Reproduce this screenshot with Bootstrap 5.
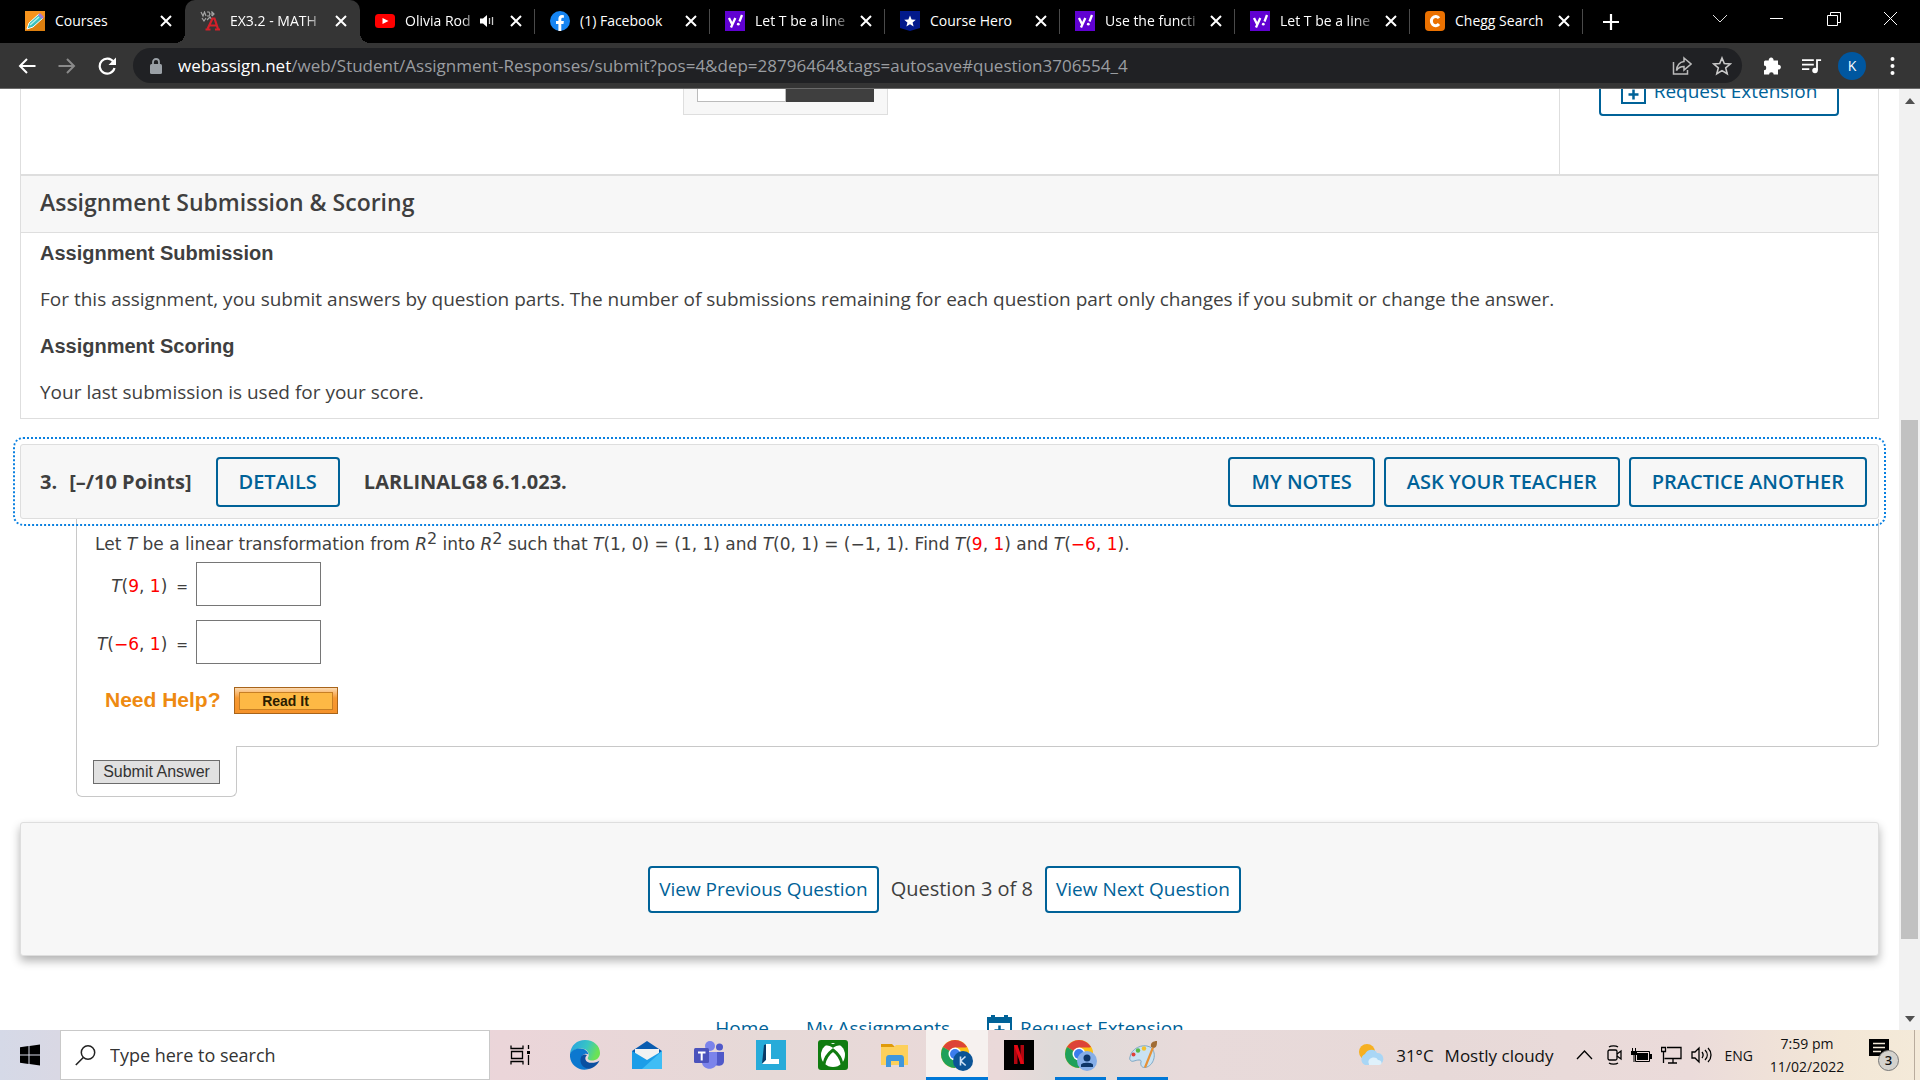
<!DOCTYPE html>
<html lang="en">
<head>
<meta charset="utf-8">
<meta name="viewport" content="width=device-width, initial-scale=1">
<title>EX3.2 - MATH</title>
<link href="https://cdn.jsdelivr.net/npm/bootstrap@5.3.0/dist/css/bootstrap.min.css" rel="stylesheet">
<style>
  :root { --ui: "Open Sans", "Noto Sans", sans-serif; --wa-blue: #006298; --ink: #3f3f3f; --line: #dedede; --pane: #f7f7f7; }
  body { font-family: var(--ui); color: var(--ink); font-size: 20px; line-height: 28px; }
  svg { display: block; flex: none; }

  /* browser chrome */
  .tabstrip { background: #000; height: 43px; padding-left: 10px; }
  .tab { width: 175px; height: 43px; padding: 0 13px 2px 15px; color: #fff; font-size: 14px; line-height: 20px; position: relative; }
  .tab-end { width: 173px; }
  .tab .label { flex: 1 1 0; margin-left: 10px; white-space: nowrap; overflow: hidden; }
  .tab .fade-label { -webkit-mask-image: linear-gradient(to right, #000 75%, transparent); mask-image: linear-gradient(to right, #000 75%, transparent); }
  .tab.sep::after { content: ""; position: absolute; right: 0; top: 9px; width: 1px; height: 25px; background: #4a4a4a; }
  .tab.current { background: #353535; border-radius: 10px 10px 0 0; }
  .tab.current::before, .tab.current::after { content: ""; position: absolute; bottom: 0; width: 10px; height: 10px; }
  .tab.current::before { left: -10px; background: radial-gradient(circle at 0 0, transparent 10px, #353535 10px); }
  .tab.current::after { right: -10px; background: radial-gradient(circle at 100% 0, transparent 10px, #353535 10px); }
  .plainbtn { background: none; border: 0; padding: 0; color: inherit; display: block; flex: none; }
  .tab .plainbtn { margin-left: 6px; }
  .newtab { margin-left: 20px; }
  .wincontrols { padding: 8px 1px 0 0; }
  .toolbar { background: #353535; height: 46px; border-bottom: 1px solid #6a6a6a; padding: 0 25px 0 18px; }
  .navset { gap: 22px; margin-right: 17px; }
  .omnibox { background: #202124; border-radius: 18px; height: 35px; padding: 0 10px 0 17px; }
  .url { color: #9a9da1; font-size: 17px; line-height: 24px; white-space: nowrap; overflow: hidden; }
  .url b { color: #fff; font-weight: 400; }
  .avatar { width: 28px; height: 28px; border-radius: 50%; background: #0057a0; color: #fff; font-size: 14px; line-height: 28px; text-align: center; }

  /* scrolled document */
  .viewport { overflow: hidden; min-height: 0; background: #fff; }
  .doc { padding: 0 20px; margin-top: -40px; }
  .track { width: 21px; background: #f1f1f1; padding: 9px 2px 8px 2px; }
  .thumb { background: #c1c1c1; }
  .panel-top { border: 1px solid var(--line); border-width: 0 1px 2px; height: 127px; }
  .toggle-col { padding-right: 10px; }
  .side-col { width: 319px; border-left: 1px solid var(--line); padding: 17px 39px 0 39px; }
  .btn-wa { --bs-btn-color: var(--wa-blue); --bs-btn-border-color: var(--wa-blue); --bs-btn-hover-color: #fff; --bs-btn-hover-bg: var(--wa-blue); --bs-btn-border-width: 2px; --bs-btn-border-radius: 4px; --bs-btn-font-size: 20px; --bs-btn-line-height: 28px; --bs-btn-padding-x: 21px; --bs-btn-padding-y: 9px; white-space: nowrap; }
  .btn-wa.strong-btn { --bs-btn-font-weight: 600; }
  .btn-wa.pager { --bs-btn-bg: #fff; --bs-btn-font-size: 19px; --bs-btn-padding-x: 9px; --bs-btn-padding-y: 8px; --bs-btn-line-height: 27px; }
  .btn-wa.btn-ext { --bs-btn-font-size: 19px; --bs-btn-padding-x: 10px; }
  .toggle-box { width: 205px; height: 66px; background: var(--pane); border: 1px solid var(--line); padding: 0 13px 12px; }
  .toggle-box span { flex: 1 1 0; }
  .t-off { background: #fff; border: 1px solid #bbb; }
  .t-on { background: var(--ink); }
  .sub-head { background: var(--pane); border: 1px solid var(--line); border-top: 0; padding: 10px 19px 14px; }
  .sub-head h2 { font-size: 23px; line-height: 32px; font-weight: 600; margin: 0; }
  .sub-body { border: 1px solid var(--line); border-top: 0; padding: 6px 19px 12px; margin-bottom: 25px; }
  .sub-body h3 { font: 700 20px/28px "Liberation Sans", Arial, sans-serif; margin: 0 0 18px; }
  .sub-body p { margin: 0 0 19px; font-size: 19px; }
  .sub-body p:last-child { margin: 0; }
  .q-head { background: var(--pane); border: 1px solid var(--line); border-radius: 3px; height: 75px; padding: 0 11px 0 19px; font-weight: 700; outline: 2px dotted #0a80e0; outline-offset: 5px; }
  .q-actions { gap: 9px; }
  .q-wrap { margin-left: 56px; }
  .q-body { border: 1px solid #c8c8c8; border-top: 0; border-radius: 0 0 4px 0; padding: 9px 18px 31px; height: 228px; font: 17px/32px "DejaVu Sans", Verdana, sans-serif; }
  .q-body p { margin: 0 0 2px; }
  .q-body sup { font-size: 16px; top: -6px; line-height: 0; }
  .red { color: #f00; }
  .ans { margin-bottom: 14px; }
  .ans label { width: 93px; padding-top: 4px; margin-right: 8px; white-space: nowrap; }
  .eq { font-size: 14px; margin-left: 9px; }
  .ans input { width: 125px; height: 44px; border: 1px solid #767676; background: #fff; }
  .help { margin: 22px 0 0 10px; height: 28px; gap: 13px; }
  .help strong { font: 700 21px/28px "Liberation Sans", Arial, sans-serif; color: #ee8a11; }
  .read { width: 104px; height: 27px; border: 1px solid #a8641a; padding: 4px; background: linear-gradient(#fbd9b0, #f79a33 40%, #f5922a); }
  .read span { display: block; border: 1px solid #c77f24; background: #fdb945; color: #2a1c00; font: 700 14px/16px "Liberation Sans", Arial, sans-serif; }
  .q-submit { border: 1px solid #c8c8c8; border-top: 0; border-radius: 0 0 6px 6px; width: 161px; height: 51px; margin-top: -1px; background: #fff; position: relative; padding: 14px 0 0 16px; }
  .q-submit button { width: 127px; height: 24px; border: 1px solid #6c6c6c; background: #e1e1e1; color: #333; padding: 0; font: 16px/22px "Liberation Sans", Arial, sans-serif; display: block; }
  .pager-box { background: var(--pane); border: 1px solid var(--line); border-radius: 3px; height: 134px; margin-top: 25px; padding-right: 10px; box-shadow: 0 5px 10px rgba(0,0,0,.3); }
  .foot { margin-top: 58px; font-size: 19px; gap: 37px; }
  .foot a { color: var(--wa-blue); text-decoration: none; }

  /* taskbar */
  .taskbar { height: 50px; background: linear-gradient(90deg, #d5d9e7 0, #d9d8e4 3%, #ebd5d9 26%, #e6d9d7 40%, #ead9d9 52%, #dfdbd9 55%, #e8dada 62%, #e7d9d8 75%, #ebdbda 88%, #f3e7d6 96%, #f4ead9 100%); color: #111; }
  .start { width: 60px; height: 50px; }
  .search { width: 430px; height: 50px; background: #fff; border: 1px solid #c9c9c9; padding-left: 14px; }
  .search input { border: 0; outline: 0; background: none; font-size: 18px; line-height: 26px; width: 360px; color: #222; padding: 0; margin-left: 14px; }
  .search input::placeholder { color: #333; opacity: 1; }
  .app { width: 62px; height: 50px; display: flex; align-items: center; justify-content: center; position: relative; text-decoration: none; }
  .app.tasks { width: 64px; padding-right: 4px; }
  .app.open::after { content: ""; position: absolute; left: 5px; right: 6px; bottom: 0; height: 3px; background: #0078d7; }
  .app.front { background: #f6f1ef; }
  .app.front::after { left: 0; right: 0; }
  .tray { font-size: 14px; line-height: 23px; white-space: nowrap; }
  .weather { font-size: 17px; gap: 11px; margin: 0 22px 0 12px; }
  .icons { gap: 9px; margin: 0 12px 0 14px; }
  .clock { width: 84px; text-align: center; margin: 0 11px 0 12px; }
  .note { width: 34px; height: 32px; position: relative; margin: 0 11px 0 9px; }
  .note b { position: absolute; left: 9px; top: 11px; width: 21px; height: 21px; border-radius: 50%; background: #d4d2cd; border: 1px solid #777; font-weight: 600; font-size: 13px; line-height: 19px; text-align: center; }
  .showdesk { width: 6px; height: 50px; border-left: 1px solid #b9ac9d; }
</style>
<script src="https://cdn.jsdelivr.net/npm/bootstrap@5.3.0/dist/js/bootstrap.bundle.min.js"></script>
</head>
<body class="vh-100 d-flex flex-column overflow-hidden">

<svg width="0" height="0" class="position-absolute">
  <defs>
    <symbol id="x" viewBox="0 0 12 12"><path d="M1 1l10 10M11 1L1 11" stroke="#fff" stroke-width="2" fill="none"/></symbol>
    <symbol id="yahoo" viewBox="0 0 20 20"><path fill="#6001d2" d="M0 0h20v20H0z"/><path d="M4 7l3 6M10.300 7L6 16.500M14.500 10.500L17 4" stroke="#fff" stroke-width="2.300" fill="none"/><circle cx="13.300" cy="13.200" r="1.400" fill="#fff"/></symbol>
    <symbol id="chrome" viewBox="0 0 32 32"><circle cx="14" cy="15" r="14" fill="#fbc116"/><path d="M14 15L1.900 8A14 14 0 0 1 26.100 8z" fill="#dd4437"/><path d="M14 15L1.900 8A14 14 0 0 0 14 29l6-10.500z" fill="#1fa15a"/><path d="M14 15V8.500h12.300A14 14 0 0 1 14 29l6-10.500z" fill="#fbc116"/><circle cx="14" cy="15" r="6.500" fill="#fff"/><circle cx="14" cy="15" r="5" fill="#3b7ded"/></symbol>
    <symbol id="cal" viewBox="0 0 25 26"><path d="M1 4h23v21H1z" fill="#fff" stroke="#006298" stroke-width="2"/><path d="M1 4h23v5H1zM4 1h4v4H4zM17 1h4v4h-4z" fill="#006298"/><path d="M12.500 11.500v10M7.500 16.500h10" stroke="#006298" stroke-width="2.500"/></symbol>
  </defs>
</svg>

<header class="flex-shrink-0">
  <div class="tabstrip d-flex" id="tabs">
    <div class="tab d-flex align-items-center flex-shrink-0">
      <svg width="20" height="20" viewBox="0 0 20 20"><path fill="#f7941d" d="M0 0h20v20H0z"/><path fill="#dd7f0f" d="M0 20L20 6v14z"/><path d="M2 18l2-6L14 3l4 4L8 16z" fill="#3cc0bd" stroke="#fff" stroke-width="1"/><path d="M13 4l2-2 4 4-2 2z" fill="#a77bd0"/><path d="M5 14l9-8" stroke="#b4f3ed" stroke-width="1.500"/></svg>
      <span class="label">Courses</span><button class="plainbtn" aria-label="Close tab"><svg width="12" height="12"><use href="#x"/></svg></button>
    </div>
    <div class="tab current d-flex align-items-center flex-shrink-0">
      <svg width="20" height="20" viewBox="0 0 20 20"><path d="M1 1l2 4 1.500-4 1.500 4M7 1h2l1 2-1 2H7M12 5V1l2 2-2 2M2 7l2 3 2-3M7 9l3-3 2 3" stroke="#a5a5a5" stroke-width="1.200" fill="none"/><path d="M7.500 18l5-10.500h2l3.500 10.500M10 14.500h6" stroke="#d3202a" stroke-width="2.200" fill="none"/><path d="M5.500 18.500h5M15 18.500h5" stroke="#d3202a" stroke-width="2"/></svg>
      <span class="label fade-label">EX3.2 - MATH</span><button class="plainbtn" aria-label="Close tab"><svg width="12" height="12"><use href="#x"/></svg></button>
    </div>
    <div class="tab sep d-flex align-items-center flex-shrink-0">
      <svg width="20" height="20" viewBox="0 0 20 20"><rect y="3" width="20" height="14" rx="3.500" fill="#f00"/><path d="M7.500 7l6 3-6 3z" fill="#fff"/></svg>
      <span class="label fade-label">Olivia Rod</span>
      <svg width="14" height="14" viewBox="0 0 14 14"><path d="M0 4.500h3L7 1v12L3 9.500H0z" fill="#fff"/><path d="M9.500 4v6M12.500 3v8" stroke="#ccc" stroke-width="1.300"/></svg>
      <button class="plainbtn ms-3" aria-label="Close tab"><svg width="12" height="12"><use href="#x"/></svg></button>
    </div>
    <div class="tab sep d-flex align-items-center flex-shrink-0">
      <svg width="20" height="20" viewBox="0 0 20 20"><circle cx="10" cy="10" r="10" fill="#1584f2"/><path d="M8.400 20v-7H6v-3h2.400V7.800C8.400 5.300 9.900 4 12 4l1.900.2v2.500h-1.200c-1.100 0-1.400.7-1.400 1.400V10h2.600l-.4 3h-2.200v7z" fill="#fff"/></svg>
      <span class="label">(1) Facebook</span><button class="plainbtn" aria-label="Close tab"><svg width="12" height="12"><use href="#x"/></svg></button>
    </div>
    <div class="tab sep d-flex align-items-center flex-shrink-0">
      <svg width="20" height="20"><use href="#yahoo"/></svg>
      <span class="label fade-label">Let T be a line</span><button class="plainbtn" aria-label="Close tab"><svg width="12" height="12"><use href="#x"/></svg></button>
    </div>
    <div class="tab sep d-flex align-items-center flex-shrink-0">
      <svg width="20" height="20" viewBox="0 0 20 20"><path d="M0 0h20v17l-10 3-10-3z" fill="#02198b"/><path d="M10 4.500l1.600 3.900 4.200.3-3.200 2.700 1 4.100L10 13.300l-3.600 2.200 1-4.100-3.200-2.700 4.200-.3z" fill="#fff"/></svg>
      <span class="label">Course Hero</span><button class="plainbtn" aria-label="Close tab"><svg width="12" height="12"><use href="#x"/></svg></button>
    </div>
    <div class="tab sep d-flex align-items-center flex-shrink-0">
      <svg width="20" height="20"><use href="#yahoo"/></svg>
      <span class="label fade-label">Use the functi</span><button class="plainbtn" aria-label="Close tab"><svg width="12" height="12"><use href="#x"/></svg></button>
    </div>
    <div class="tab sep d-flex align-items-center flex-shrink-0">
      <svg width="20" height="20"><use href="#yahoo"/></svg>
      <span class="label fade-label">Let T be a line</span><button class="plainbtn" aria-label="Close tab"><svg width="12" height="12"><use href="#x"/></svg></button>
    </div>
    <div class="tab sep tab-end d-flex align-items-center flex-shrink-0">
      <svg width="20" height="20" viewBox="0 0 20 20"><rect width="20" height="20" rx="4" fill="#eb7100"/><path d="M14 7.200A4.300 4.600 0 1 0 14 13" stroke="#fff" stroke-width="3" fill="none"/></svg>
      <span class="label">Chegg Search</span><button class="plainbtn" aria-label="Close tab"><svg width="12" height="12"><use href="#x"/></svg></button>
    </div>
    <button class="plainbtn newtab align-self-center" aria-label="New tab"><svg width="16" height="16" viewBox="0 0 16 16"><path d="M8 0v16M0 8h16" stroke="#fff" stroke-width="2.200"/></svg></button>
    <div class="wincontrols ms-auto d-flex align-items-start">
      <button class="plainbtn" aria-label="Search tabs"><svg width="57" height="22" viewBox="0 0 57 22"><path d="M22 7l7 7 7-7" stroke="#ddd" fill="none"/></svg></button>
      <button class="plainbtn" aria-label="Minimize"><svg width="57" height="22" viewBox="0 0 57 22"><path d="M22 10.500h13" stroke="#fff"/></svg></button>
      <button class="plainbtn" aria-label="Restore"><svg width="57" height="22" viewBox="0 0 57 22"><path d="M22.500 7.500h10v10h-10zM25.500 7.500v-3h10v10h-3" stroke="#fff" fill="none"/></svg></button>
      <button class="plainbtn" aria-label="Close window"><svg width="57" height="22" viewBox="0 0 57 22"><path d="M22 4l13 13M35 4L22 17" stroke="#fff"/></svg></button>
    </div>
  </div>
  <div class="toolbar d-flex align-items-center">
    <div class="navset d-flex align-items-center">
      <button class="plainbtn" aria-label="Back"><svg width="18" height="18" viewBox="0 0 18 18"><path d="M17.500 9H2M9 2L2 9l7 7" stroke="#fff" stroke-width="2" fill="none"/></svg></button>
      <button class="plainbtn" aria-label="Forward"><svg width="18" height="18" viewBox="0 0 18 18"><path d="M.5 9H16M9 2l7 7-7 7" stroke="#8a8a8a" stroke-width="2" fill="none"/></svg></button>
      <button class="plainbtn" aria-label="Reload"><svg width="18" height="18" viewBox="0 0 18 18"><path d="M15.500 5A7.500 7.500 0 1 0 16.500 11" stroke="#fff" stroke-width="2.200" fill="none"/><path d="M18 .5V8h-7.500z" fill="#fff"/></svg></button>
    </div>
    <div class="omnibox d-flex align-items-center flex-grow-1">
      <svg width="12" height="16" viewBox="0 0 12 16"><rect y="6" width="12" height="10" rx="1.500" fill="#9aa0a6"/><path d="M3 6V4a3 3 0 0 1 6 0v2" stroke="#9aa0a6" stroke-width="1.800" fill="none"/></svg>
      <div class="url flex-grow-1 ms-3"><b>webassign.net</b>/web/Student/Assignment-Responses/submit?pos=4&amp;dep=28796464&amp;tags=autosave#question3706554_4</div>
      <button class="plainbtn" aria-label="Share"><svg width="20" height="20" viewBox="0 0 20 20"><path d="M1.500 6v12h14v-4" stroke="#bbb" stroke-width="1.500" fill="none"/><path d="M12 2l7 6-7 6v-3.500c-4 0-6 1.500-7.500 4C5 9 8 6 12 5.500z" stroke="#bbb" stroke-width="1.500" fill="none"/></svg></button>
      <button class="plainbtn ms-3 ps-1" aria-label="Bookmark"><svg width="20" height="20" viewBox="0 0 20 20"><path d="M10 2l2.300 5.600 6 .4-4.600 3.900 1.500 5.900L10 14.600 4.800 17.800l1.500-5.900L1.700 8l6-.4z" stroke="#c8c8c8" stroke-width="1.600" fill="none"/></svg></button>
    </div>
    <button class="plainbtn ms-3 ps-1" aria-label="Extensions"><svg width="20" height="20" viewBox="0 0 20 20"><path d="M3 4.500h3.800a2.400 2.400 0 1 1 4.700 0H16v4.300a2.400 2.400 0 1 1 0 4.700V18.500h-4.300a2.300 2.300 0 1 0-4.600 0H2v-4.300a2.300 2.300 0 1 0 0-4.600V5.500z" fill="#fff"/></svg></button>
    <button class="plainbtn ms-3 ps-1" aria-label="Media"><svg width="20" height="18" viewBox="0 0 22 18"><path d="M0 2.500h13M0 7.500h13M0 12.500h8" stroke="#fff" stroke-width="2"/><path d="M16.500 14V2.500H21" stroke="#fff" stroke-width="2" fill="none"/><circle cx="14.300" cy="14" r="3" fill="#fff"/></svg></button>
    <div class="avatar ms-3">K</div>
    <button class="plainbtn ms-4" aria-label="Menu"><svg width="5" height="18" viewBox="0 0 5 18"><circle cx="2.500" cy="2" r="2" fill="#fff"/><circle cx="2.500" cy="9" r="2" fill="#fff"/><circle cx="2.500" cy="16" r="2" fill="#fff"/></svg></button>
  </div>
</header>

<div class="viewport flex-grow-1 d-flex">
  <main class="doc flex-grow-1">
    <div class="panel-top d-flex">
      <div class="toggle-col flex-grow-1 d-flex justify-content-center">
        <div class="toggle-box d-flex"><span class="t-off"></span><span class="t-on"></span></div>
      </div>
      <div class="side-col">
        <button class="btn btn-wa btn-ext w-100 d-flex align-items-center justify-content-center gap-2"><svg width="25" height="26"><use href="#cal"/></svg>Request Extension</button>
      </div>
    </div>
    <section>
      <div class="sub-head"><h2>Assignment Submission &amp; Scoring</h2></div>
      <div class="sub-body">
        <h3>Assignment Submission</h3>
        <p>For this assignment, you submit answers by question parts. The number of submissions remaining for each question part only changes if you submit or change the answer.</p>
        <h3>Assignment Scoring</h3>
        <p>Your last submission is used for your score.</p>
      </div>
    </section>
    <section>
      <div class="q-head d-flex align-items-center">
        <span>3.</span><span class="ms-2 ps-1">[–/10 Points]</span>
        <button class="btn btn-wa strong-btn ms-4">DETAILS</button>
        <span class="ms-4">LARLINALG8 6.1.023.</span>
        <div class="q-actions ms-auto d-flex">
          <button class="btn btn-wa strong-btn">MY NOTES</button>
          <button class="btn btn-wa strong-btn">ASK YOUR TEACHER</button>
          <button class="btn btn-wa strong-btn">PRACTICE ANOTHER</button>
        </div>
      </div>
      <div class="q-wrap">
        <div class="q-body">
          <p>Let <i>T</i> be a linear transformation from <i>R</i><sup>2</sup> into <i>R</i><sup>2</sup> such that <i>T</i>(1, 0) = (1, 1) and <i>T</i>(0, 1) = (−1, 1). Find <i>T</i>(<span class="red">9</span>, <span class="red">1</span>) and <i>T</i>(<span class="red">−6</span>, <span class="red">1</span>).</p>
          <div class="ans d-flex align-items-center"><label for="a1" class="text-end"><i>T</i>(<span class="red">9</span>, <span class="red">1</span>)<span class="eq">=</span></label><input id="a1" type="text"></div>
          <div class="ans d-flex align-items-center"><label for="a2" class="text-end"><i>T</i>(<span class="red">−6</span>, <span class="red">1</span>)<span class="eq">=</span></label><input id="a2" type="text"></div>
          <div class="help d-flex align-items-center"><strong>Need Help?</strong><button class="read"><span>Read It</span></button></div>
        </div>
        <div class="q-submit"><button type="submit">Submit Answer</button></div>
      </div>
    </section>
    <nav class="pager-box d-flex align-items-center justify-content-center">
      <button class="btn btn-wa pager">View Previous Question</button>
      <span class="mx-2 px-1">Question 3 of 8</span>
      <button class="btn btn-wa pager">View Next Question</button>
    </nav>
    <footer class="foot d-flex justify-content-center align-items-center">
      <a href="#">Home</a><a href="#">My Assignments</a>
      <a href="#" class="d-flex gap-2"><svg width="25" height="26"><use href="#cal"/></svg>Request Extension</a>
    </footer>
  </main>
  <div class="track d-flex flex-column align-items-center flex-shrink-0">
    <svg width="10" height="6" viewBox="0 0 10 6"><path d="M0 6l5-6 5 6z" fill="#505050"/></svg>
    <div style="flex:316 1 0"></div><div class="thumb w-100" style="flex:518 1 0"></div><div style="flex:77 1 0"></div>
    <svg width="10" height="6" viewBox="0 0 10 6"><path d="M0 0l5 6 5-6z" fill="#505050"/></svg>
  </div>
</div>

<footer class="taskbar d-flex align-items-center flex-shrink-0">
  <button class="plainbtn start" aria-label="Start"><svg width="60" height="50" viewBox="0 0 60 50"><path d="M20 17.300l8.500-1.200v8.400H20zM29.500 16L40 14.500v10H29.500zM20 25.500h8.500V34L20 32.800zM29.500 25.500H40V35.500L29.500 34z"/></svg></button>
  <div class="search d-flex align-items-center"><svg width="21" height="21" viewBox="0 0 21 21"><circle cx="13" cy="7.500" r="6.700" fill="none" stroke="#222" stroke-width="1.500"/><path d="M8.300 12.500L.8 20" stroke="#222" stroke-width="1.600"/></svg>
    <input type="text" placeholder="Type here to search" aria-label="Search"></div>
  <a class="app tasks" href="#" aria-label="Task view"><svg width="20" height="20" viewBox="0 0 20 20"><path d="M1 .5v3h12v-3M1 19.500v-3h12v3M1.500 6.500h11v7h-11zM18.500 0v4M18.500 10v10" stroke="#000" stroke-width="1.300" fill="none"/><path d="M17 6h3v3h-3z"/></svg></a>
  <a class="app" href="#" aria-label="Edge"><svg width="30" height="30" viewBox="0 0 30 30"><defs><linearGradient id="eg" x1="0" y1="0" x2="1" y2=".3"><stop offset=".1" stop-color="#2aa5df"/><stop offset=".6" stop-color="#38c5c4"/><stop offset="1" stop-color="#6be255"/></linearGradient></defs><path d="M0 14C1 5 7 0 15 0c9 0 15 6 15 13 0 5-4 7.500-8 7.500-3 0-5-1.500-4-3 2.500-4-1-9-7-9-5 0-9 2.500-11 5.500z" fill="url(#eg)"/><path d="M0 14c2-4 6-5.500 10-5.500 5 0 8 3 8.500 6-3-2-7 0-7 5 0 6 5 10 10 8.500C11 33-1 26 0 14z" fill="#0c78cf"/><path d="M11.500 16c-4 8 4 15 10.500 12 3-1.500 6-4 7.500-7.500-3 2.500-13 4-14-1-.6-2 .5-3.500 1.500-4.500-2-1-4-.5-5.500 1z" fill="#0b4fa0"/></svg></a>
  <a class="app" href="#" aria-label="Mail"><svg width="30" height="28" viewBox="0 0 30 28"><path d="M0 10L15 0l15 10v4H0z" fill="#0a5cb0"/><path d="M3 8h24v12H3z" fill="#f2f2f2"/><path d="M0 10l15 9 15-9v18H0z" fill="#1b9de8"/><path d="M30 10L10 28h20z" fill="#3fbdf5"/></svg></a>
  <a class="app" href="#" aria-label="Teams"><svg width="30" height="28" viewBox="0 0 30 28"><circle cx="16" cy="5" r="5" fill="#7b83eb"/><circle cx="25.500" cy="6" r="3.500" fill="#5059c9"/><path d="M19 11h11v9c0 6-9 6-11 2z" fill="#5059c9"/><path d="M8 11h15v10c0 9-15 9-15 0z" fill="#7b83eb"/><rect y="7" width="15" height="15" rx="1.500" fill="#4b53bc"/><path d="M4 11.500h7.500M7.700 11.500v8" stroke="#fff" stroke-width="2"/></svg></a>
  <a class="app" href="#" aria-label="L"><svg width="30" height="30" viewBox="0 0 30 30"><path d="M0 0h30v30H0z" fill="#27abd9"/><path d="M8 5l3-1v15l-5 5z" fill="#0a3a66"/><path d="M10 4h5v15h8v5H6l4-4z" fill="#fff"/></svg></a>
  <a class="app" href="#" aria-label="Xbox"><svg width="30" height="30" viewBox="0 0 30 30"><rect width="30" height="30" rx="3" fill="#107c10"/><circle cx="15" cy="15" r="12" fill="#fff"/><path d="M6 24c1-6 5-11 9-14 4 3 8 8 9 14M8 4c3-.5 5 .5 7 2 2-1.500 4-2.500 7-2" stroke="#107c10" stroke-width="3" fill="none"/></svg></a>
  <a class="app" href="#" aria-label="Files"><svg width="28" height="24" viewBox="0 0 28 24"><path d="M0 1h11l3 3H0z" fill="#e09b0a"/><path d="M0 4h13l2-2h12v20H0z" fill="#fdd05b"/><path d="M5 24v-8c0-3 1-4 3-4h12c2 0 3 1 3 4v8h-5v-6h-8v6z" fill="#3f97dc"/></svg></a>
  <a class="app open front" href="#" aria-label="Chrome"><svg width="32" height="32" viewBox="0 0 32 32"><use href="#chrome"/><circle cx="22" cy="22" r="10" fill="#0b5496"/><path d="M19.500 17.500v9M24.500 17.500l-4.800 4.500 5 4.500" stroke="#cfe2f5" stroke-width="1.600" fill="none"/></svg></a>
  <a class="app" href="#" aria-label="Netflix"><svg width="30" height="30" viewBox="0 0 30 30"><path d="M0 0h30v30H0z"/><path d="M10 5h3.500v19H10zM16.500 5H20v19h-3.500z" fill="#b00610"/><path d="M10 5h3.500L20 24h-3.500z" fill="#e50914"/></svg></a>
  <a class="app open" href="#" aria-label="Chrome guest"><svg width="32" height="32" viewBox="0 0 32 32"><use href="#chrome"/><circle cx="22" cy="22" r="10" fill="#86aee8"/><circle cx="22" cy="19" r="3.500" fill="#0d3568"/><path d="M16 28v-2c0-3 12-3 12 0v2z" fill="#0d3568"/></svg></a>
  <a class="app open" href="#" aria-label="Paint"><svg width="30" height="30" viewBox="0 0 30 30"><path d="M2 17C3 9 14 3 22 7c7 4 5 17-3 20-5 2-7-2-6-5s-4-2-7-1-5-1-4-4z" fill="#c9e2f3" stroke="#7fa9c6"/><circle cx="5.500" cy="14.500" r="2" fill="#e0413a"/><circle cx="10" cy="10.500" r="2.200" fill="#58b947"/><circle cx="16" cy="8.500" r="2.200" fill="#f2c12e"/><path d="M16 27l8-20 2 1-8 20z" fill="#e79236"/><path d="M23 7c-1-4 2-6 6-6 0 3 0 6-3 7z" fill="#a06c35"/></svg></a>
  <div class="tray d-flex align-items-center ms-auto">
    <svg width="25" height="22" viewBox="0 0 25 22"><circle cx="8" cy="8" r="8" fill="#f6b021"/><path d="M6 21a6 6 0 0 1 0-11c2-5 10-6 12-1 7-1 9 10 2 12z" fill="#a9d6f5"/><path d="M10 20c-3-6 7-9 9-4 4 0 5 5 1 5H10z" fill="#dff1fb"/></svg>
    <div class="weather d-flex"><span>31°C</span><span>Mostly cloudy</span></div>
    <svg width="17" height="10" viewBox="0 0 17 10"><path d="M1 9l7.500-8L16 9" stroke="#000" stroke-width="1.300" fill="none"/></svg>
    <div class="icons d-flex align-items-center">
      <svg width="15" height="20" viewBox="0 0 15 20"><rect x="1" y="5" width="9" height="10" rx="1.500" stroke="#000" stroke-width="1.300" fill="none"/><path d="M10 9l4-3v8l-4-3M2 2c2-1.500 7-1.500 9 0M2 18c2 1.500 7 1.500 9 0" stroke="#000" stroke-width="1.300" fill="none"/></svg>
      <svg width="21" height="14" viewBox="0 0 21 14"><path d="M4.500 3.500h14v10h-14z" fill="none" stroke="#000"/><path d="M6 5h11v7H6zM19 6h2v5h-2zM0 3h6v4H0z"/><path d="M1.500 0v3M4.500 0v3M3 7v7" stroke="#000"/></svg>
      <svg width="21" height="18" viewBox="0 0 21 18"><path d="M6 1.500h14v11H3.500M12 13v4M7 17h9M.5 1.500h4v4h-4zM2.500 6v11" stroke="#000" stroke-width="1.300" fill="none"/></svg>
      <svg width="22" height="18" viewBox="0 0 22 18"><path d="M1 6h3l4-4v14l-4-4H1zM11 6c1.500 2 1.500 4 0 6M14 4c3 3 3 7 0 10M17 2c4 4 4 10 0 14" stroke="#000" stroke-width="1.300" fill="none"/></svg>
    </div>
    <span>ENG</span>
    <div class="clock">7:59 pm<br>11/02/2022</div>
    <div class="note"><svg width="21" height="21" viewBox="0 0 21 21"><path d="M0 0h20v17h-5v4l-4-4H0z"/><path d="M4 4.500h12M4 8.500h12M4 12.500h8" stroke="#f4ead9" stroke-width="1.300"/></svg><b>3</b></div>
    <div class="showdesk"></div>
  </div>
</footer>
</body>
</html>
